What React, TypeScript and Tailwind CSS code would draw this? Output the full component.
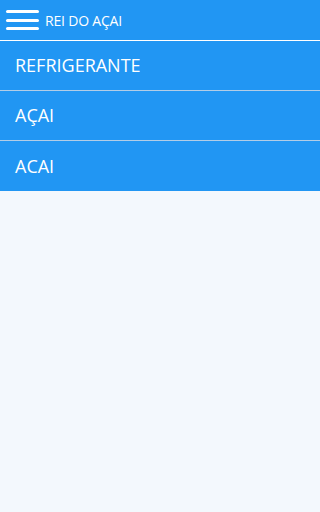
const items = ["REFRIGERANTE", "AÇAI", "ACAI"];

export default function App() {
  return (
    <div className="min-h-[512px] w-full bg-[#f3f8fd] font-['Open_Sans',sans-serif]">
      <header className="flex h-[41px] items-center border-b border-white bg-[#2196f3] pl-[6px]">
        <div className="flex w-[33px] flex-col gap-[5.5px]">
          <span className="h-[3px] rounded-full bg-white" />
          <span className="h-[3px] rounded-full bg-white" />
          <span className="h-[3px] rounded-full bg-white" />
        </div>
        <span className="ml-[6px] text-[14px] tracking-[-0.2px] text-white">REI DO AÇAI</span>
      </header>
      <ul className="bg-[#2196f3]">
        {items.map((item) => (
          <li key={item} className="flex h-[50px] items-center border-b border-[#b3cde6] px-[15px] text-[18px] text-white last:border-b-0">
            {item}
          </li>
        ))}
      </ul>
    </div>
  );
}
